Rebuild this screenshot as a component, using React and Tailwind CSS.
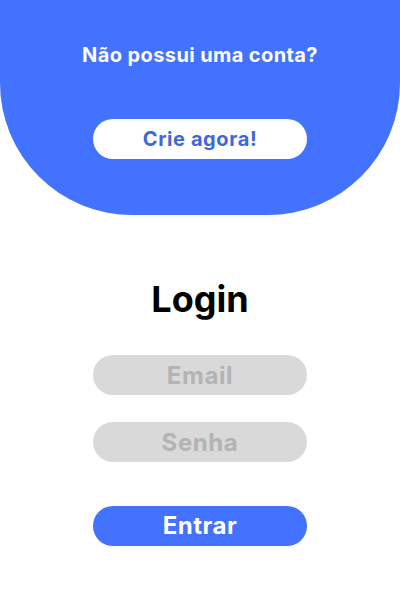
import React, { useState } from 'react';

export default function App() {
  const [email, setEmail] = useState('');
  const [senha, setSenha] = useState('');

  return (
    <div className="w-[400px] h-[600px] bg-white font-['Inter','Liberation_Sans',sans-serif] flex flex-col items-center">
      <header className="w-full h-[215px] bg-[#4272fe] rounded-b-[132px] flex flex-col items-center pt-[42px]">
        <h2 className="text-white font-bold text-[20px] leading-[26px] tracking-[0.4px]">Não possui uma conta?</h2>
        <button className="mt-[51px] w-[214px] h-[40px] rounded-full bg-white text-[#3f67d9] font-bold text-[20px] tracking-[0.6px]">
          Crie agora!
        </button>
      </header>

      <h1 className="mt-[62px] text-black font-bold text-[36px] leading-[44px]">Login</h1>

      <form className="mt-[34px] flex flex-col items-center" onSubmit={(e) => e.preventDefault()}>
        <input
          type="email"
          placeholder="Email"
          value={email}
          onChange={(e) => setEmail(e.target.value)}
          className="w-[214px] h-[40px] rounded-full bg-[#d9d9d9] text-center font-bold text-[24px] tracking-[0.6px] text-gray-700 placeholder:text-[#b3b3b3] outline-none"
        />
        <input
          type="password"
          placeholder="Senha"
          value={senha}
          onChange={(e) => setSenha(e.target.value)}
          className="mt-[27px] w-[214px] h-[40px] rounded-full bg-[#d9d9d9] text-center font-bold text-[24px] tracking-[0.6px] text-gray-700 placeholder:text-[#b3b3b3] outline-none"
        />
        <button className="mt-[44px] w-[214px] h-[40px] rounded-full bg-[#4272fe] text-white font-bold text-[24px] tracking-[0.5px]">
          Entrar
        </button>
      </form>
    </div>
  );
}
